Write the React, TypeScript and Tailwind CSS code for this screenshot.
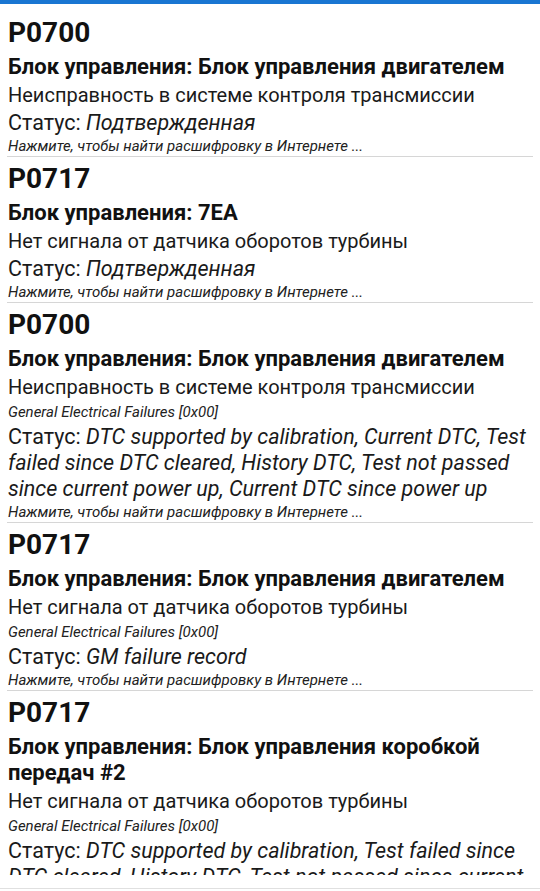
type Code = {
  code: string
  unit: string
  desc: string
  extra?: string
  status: string
}

const codes: Code[] = [
  {
    code: 'P0700',
    unit: 'Блок управления: Блок управления двигателем',
    desc: 'Неисправность в системе контроля трансмиссии',
    status: 'Подтвержденная',
  },
  {
    code: 'P0717',
    unit: 'Блок управления: 7EA',
    desc: 'Нет сигнала от датчика оборотов турбины',
    status: 'Подтвержденная',
  },
  {
    code: 'P0700',
    unit: 'Блок управления: Блок управления двигателем',
    desc: 'Неисправность в системе контроля трансмиссии',
    extra: 'General Electrical Failures [0x00]',
    status:
      'DTC supported by calibration, Current DTC, Test failed since DTC cleared, History DTC, Test not passed since current power up, Current DTC since power up',
  },
  {
    code: 'P0717',
    unit: 'Блок управления: Блок управления двигателем',
    desc: 'Нет сигнала от датчика оборотов турбины',
    extra: 'General Electrical Failures [0x00]',
    status: 'GM failure record',
  },
  {
    code: 'P0717',
    unit: 'Блок управления: Блок управления коробкой передач #2',
    desc: 'Нет сигнала от датчика оборотов турбины',
    extra: 'General Electrical Failures [0x00]',
    status:
      'DTC supported by calibration, Test failed since DTC cleared, History DTC, Test not passed since current power up',
  },
]

function CodeRow({ item }: { item: Code }) {
  return (
    <div className="border-b border-[#d6d6d6] pt-[5px] pl-px pr-1">
      <div className="text-[28px] leading-[34px] font-bold text-[#111]">{item.code}</div>
      <div className="mt-1 text-[22px] leading-[26px] font-bold text-[#111]">{item.unit}</div>
      <div className="mt-px text-[20px] leading-[28px] text-[#1a1a1a]">{item.desc}</div>
      {item.extra && (
        <div className="text-[15px] leading-[22px] italic text-[#222]">{item.extra}</div>
      )}
      <div className="mt-px text-[21.5px] leading-[26px] text-[#1a1a1a]">
        Статус: <span className="italic">{item.status}</span>
      </div>
      <div className="text-[15px] leading-[20px] italic text-[#222]">
        Нажмите, чтобы найти расшифровку в Интернете ...
      </div>
    </div>
  )
}

export default function App() {
  return (
    <div
      className="w-[540px] h-[891px] bg-white flex flex-col overflow-hidden"
      style={{ fontFamily: 'Roboto, "Noto Sans", sans-serif' }}
    >
      <div className="h-1 shrink-0 bg-[#1976d2]" />
      <div className="h-[871px] shrink-0 overflow-hidden px-[7px] pt-[7px]">
        {codes.map((c, i) => (
          <CodeRow key={i} item={c} />
        ))}
      </div>
      <div className="mt-[13px] h-px bg-[#e0e0e0]" />
    </div>
  )
}
